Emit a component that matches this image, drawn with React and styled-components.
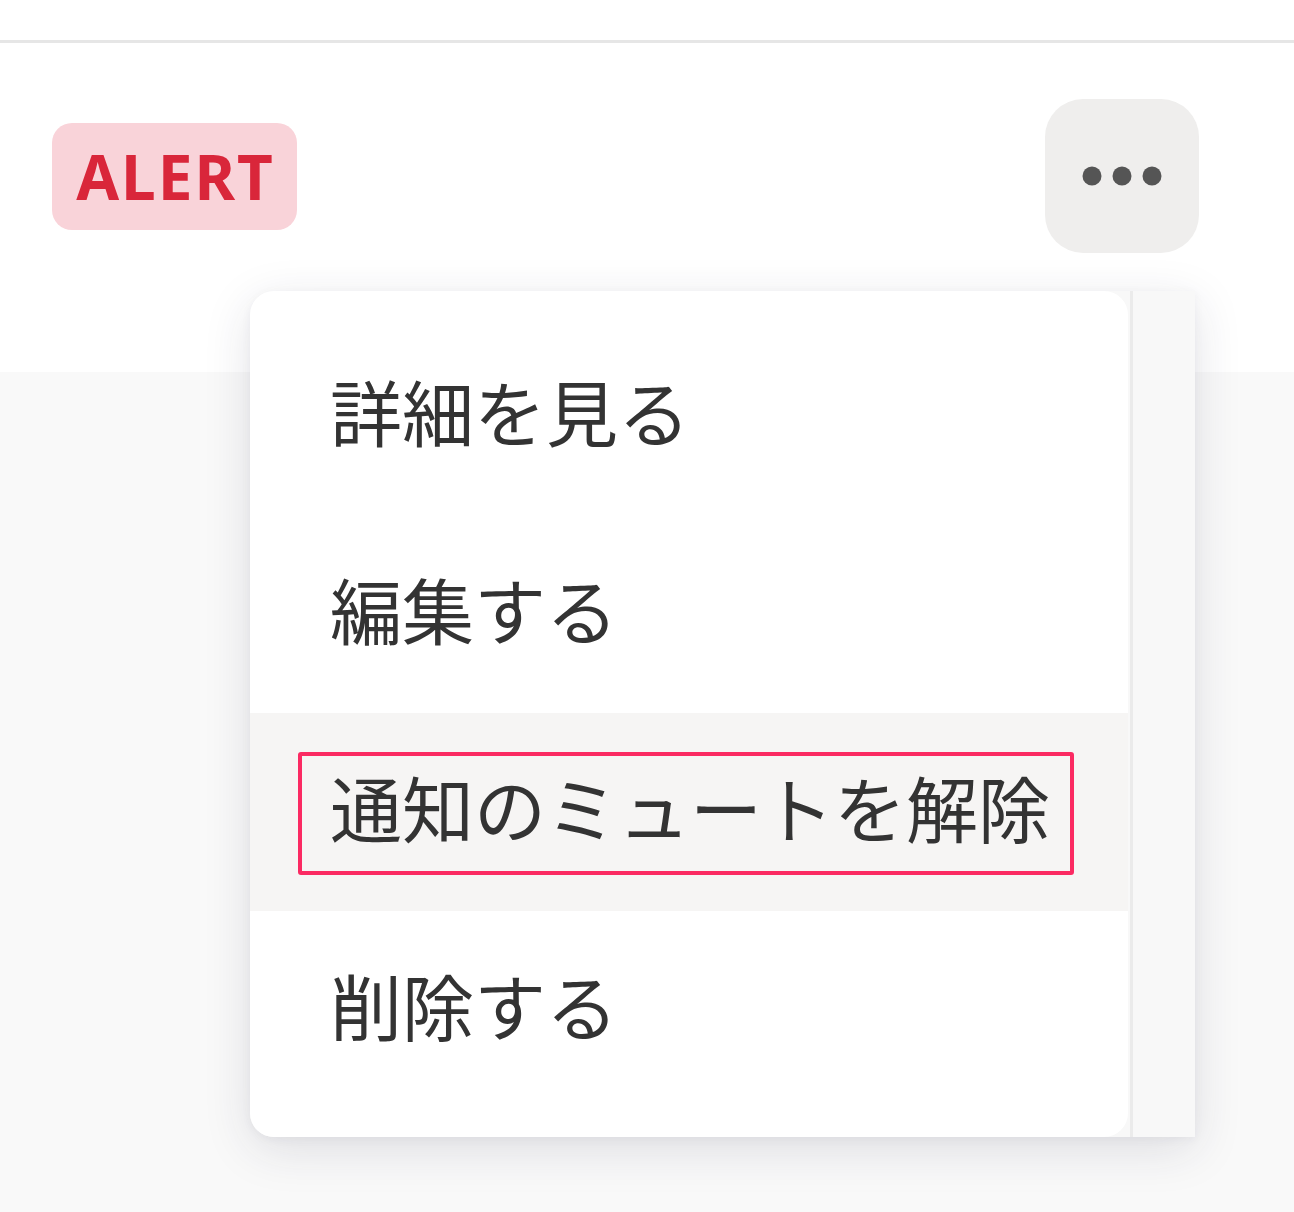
import React from "react";
import styled, { createGlobalStyle } from "styled-components";

const GlobalStyle = createGlobalStyle`
  html, body {
    margin: 0;
    padding: 0;
    background: #f9f9f9;
  }
  body {
    font-family: "Noto Sans", "Noto Sans CJK JP", sans-serif;
  }
`;

const items = [
  { id: "view", label: "詳細を見る" },
  { id: "edit", label: "編集する" },
  { id: "unmute", label: "通知のミュートを解除", active: true },
  { id: "delete", label: "削除する" },
];

const App = () => {
  return (
    <Page>
      <GlobalStyle />
      <TopStrip />
      <Header>
        <Badge>ALERT</Badge>
        <MoreButton aria-label="その他">
          <svg width="80" height="20" viewBox="0 0 80 20">
            <circle cx="10" cy="10" r="9.5" fill="#555" />
            <circle cx="40" cy="10" r="9.5" fill="#555" />
            <circle cx="70" cy="10" r="9.5" fill="#555" />
          </svg>
        </MoreButton>
      </Header>
      <Content />

      <Popover role="menu">
        <MenuList>
          {items.map((item) => (
            <MenuItem key={item.id} $active={item.active} role="menuitem">
              <Label $focused={item.active}>{item.label}</Label>
            </MenuItem>
          ))}
        </MenuList>
        <ScrollTrack />
      </Popover>
    </Page>
  );
};

const Page = styled.div`
  position: relative;
  width: 100%;
  min-height: 1212px;
  background: #f9f9f9;
  overflow: hidden;
`;

const TopStrip = styled.div`
  height: 40px;
  background: #fff;
  border-bottom: 3px solid #e6e6e6;
`;

const Header = styled.header`
  display: flex;
  align-items: center;
  justify-content: space-between;
  height: 329px;
  box-sizing: border-box;
  padding: 56px 95px 119px 52px;
  background: #fff;
`;

const Badge = styled.span`
  display: inline-flex;
  align-items: center;
  justify-content: center;
  box-sizing: border-box;
  width: 245px;
  height: 107px;
  border-radius: 20px;
  background: #f9d3d9;
  color: #d9263a;
  font-family: "Noto Sans", "Liberation Sans", sans-serif;
  font-weight: 700;
  font-size: 62px;
  letter-spacing: 2px;
  padding-left: 2px;
`;

const MoreButton = styled.button`
  display: flex;
  align-items: center;
  justify-content: center;
  width: 154px;
  height: 154px;
  border: none;
  border-radius: 38px;
  background: #efeeed;
  padding: 0;
  cursor: pointer;
`;

const Content = styled.main`
  min-height: 840px;
  background: #f9f9f9;
`;

const Popover = styled.div`
  position: absolute;
  top: 291px;
  left: 250px;
  width: 945px;
  height: 846px;
  display: flex;
  background: #f8f8f8;
  border-radius: 24px 0 0 24px;
  box-shadow: 0 12px 48px rgba(40, 40, 70, 0.13), 0 2px 10px rgba(40, 40, 70, 0.05);
`;

const MenuList = styled.ul`
  flex: 1;
  list-style: none;
  margin: 0;
  padding: 26px 0 27px;
  background: #fff;
  border-radius: 24px;
`;

const MenuItem = styled.li`
  display: flex;
  align-items: center;
  height: 198px;
  box-sizing: border-box;
  padding-left: 48px;
  padding-top: 2px;
  background: ${(p) => (p.$active ? "#f6f5f4" : "transparent")};
`;

const Label = styled.span`
  display: inline-block;
  padding: 0 20px 15px 28px;
  border: 4px solid ${(p) => (p.$focused ? "#fb2a62" : "transparent")};
  border-radius: 3px;
  font-family: "Noto Sans CJK JP", "Noto Sans", sans-serif;
  font-size: 72px;
  line-height: 100px;
  color: #333;
  white-space: nowrap;
`;

const ScrollTrack = styled.div`
  width: 62px;
  margin-left: 2px;
  border-left: 3px solid #ebebeb;
  background: #f8f8f8;
`;

export default App;
